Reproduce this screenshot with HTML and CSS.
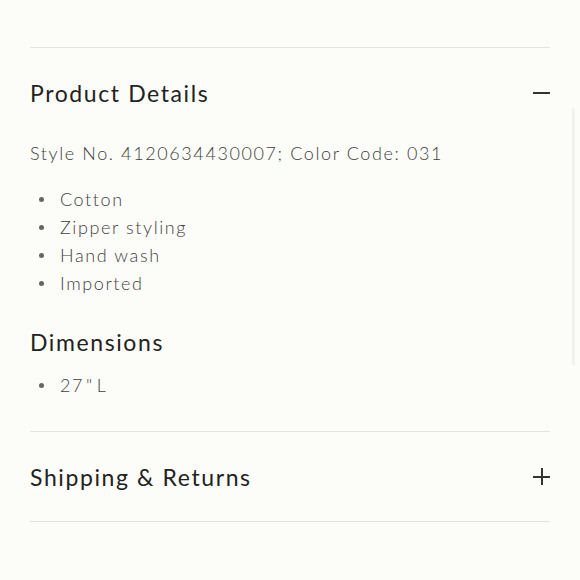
FILE: index.html
```html
<!DOCTYPE html>
<html lang="en">
<head>
<meta charset="utf-8">
<title>Product Details</title>
<link rel="stylesheet" href="styles.css">
</head>
<body>
<div class="page">
  <section class="acc open">
    <div class="acc-head">
      <h2 class="acc-title">Product Details</h2>
      <span class="icon minus"></span>
    </div>
    <div class="acc-body">
      <p class="style-no">Style No. 4120634430007; Color Code: 031</p>
      <ul class="bullets">
        <li>Cotton</li>
        <li>Zipper styling</li>
        <li>Hand wash</li>
        <li>Imported</li>
      </ul>
      <h3 class="sub-title">Dimensions</h3>
      <ul class="bullets dims">
        <li>27<span class="quote">"</span>L</li>
      </ul>
    </div>
  </section>
  <section class="acc">
    <div class="acc-head">
      <h2 class="acc-title">Shipping &amp; Returns</h2>
      <span class="icon plus"></span>
    </div>
  </section>
</div>
<div class="scrollbar"></div>
</body>
</html>
```
FILE: styles.css
```css
html, body {
  margin: 0;
  padding: 0;
  background: #fcfcf8;
}
body {
  font-family: Lato, "Liberation Sans", sans-serif;
  color: #222;
  width: 580px;
  height: 580px;
  overflow: hidden;
  position: relative;
}
.page {
  padding: 47px 30px 0 30px;
}
.acc {
  border-top: 1px solid #e2e2de;
}
.acc:last-child {
  border-bottom: 1px solid #e2e2de;
}
.acc-head {
  height: 89px;
  display: flex;
  align-items: center;
  justify-content: space-between;
}
.acc-title {
  margin: 0;
  font-size: 23px;
  font-weight: 400;
  letter-spacing: 1.6px;
  color: #222;
  line-height: 30px;
}
.icon {
  width: 17px;
  height: 17px;
  position: relative;
  display: block;
}
.icon::before, .icon::after {
  content: "";
  position: absolute;
  background: #333;
}
.minus::before {
  left: 0; right: 0; top: 8px; height: 1.5px;
}
.minus::after { display: none; }
.plus::before {
  left: 0; right: 0; top: 8px; height: 1.5px;
}
.plus::after {
  top: 0; bottom: 0; left: 8px; width: 1.5px;
}
.acc-body {
  padding-bottom: 32px;
}
.style-no {
  margin: 0;
  font-size: 18px;
  font-weight: 300;
  line-height: 28px;
  letter-spacing: 1.6px;
  color: #3f3f3f;
  padding-top: 2px;
}
.bullets {
  margin: 18px 0 0 0;
  padding: 0;
  list-style: none;
  font-size: 18px;
  font-weight: 300;
  line-height: 28px;
  letter-spacing: 1.6px;
  color: #3f3f3f;
}
.bullets li {
  display: flex;
  align-items: center;
}
.bullets li::before {
  content: "";
  width: 5px;
  height: 5px;
  border-radius: 50%;
  background: #666;
  margin-left: 9px;
  margin-right: 16px;
  flex: none;
}
.quote {
  margin: 0 3px 0 2px;
}
.sub-title {
  margin: 30px 0 0 0;
  font-size: 23px;
  font-weight: 400;
  letter-spacing: 1.6px;
  line-height: 30px;
  color: #222;
}
.dims {
  margin-top: 14px;
}
.scrollbar {
  position: absolute;
  right: 5px;
  top: 108px;
  width: 3px;
  height: 257px;
  border-radius: 2px;
  background: #f1f1ed;
}
```
